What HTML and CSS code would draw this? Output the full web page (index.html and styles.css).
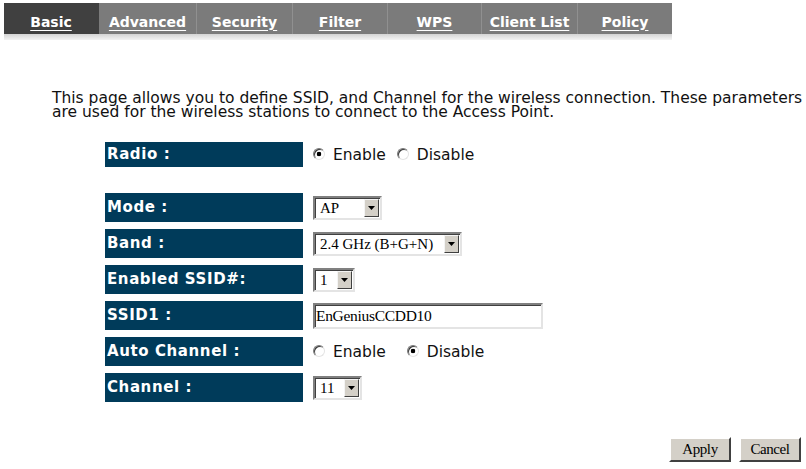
FILE: index.html
```html
<!DOCTYPE html>
<html>
<head>
<meta charset="utf-8">
<link rel="stylesheet" href="styles.css">
</head>
<body>
<div class="page">
  <nav class="tabs">
    <a class="tab active" style="width:95px">Basic</a>
    <a class="tab" style="width:98px">Advanced</a>
    <a class="tab" style="width:96px">Security</a>
    <a class="tab" style="width:95px">Filter</a>
    <a class="tab" style="width:94px">WPS</a>
    <a class="tab" style="width:96px">Client List</a>
    <a class="tab last" style="width:94px">Policy</a>
  </nav>
  <div class="tabs-shadow"></div>

  <p class="intro">This page allows you to define SSID, and Channel for the wireless connection. These parameters are used for the wireless stations to connect to the Access Point.</p>

  <div class="form">
    <div class="row radio-row">
      <div class="label">Radio :</div>
      <div class="ctrl">
        <label class="opt"><input type="radio" name="radio" checked><span>Enable</span></label>
        <label class="opt"><input type="radio" name="radio"><span>Disable</span></label>
      </div>
    </div>

    <div class="row first">
      <div class="label">Mode :</div>
      <div class="ctrl">
        <span class="sel" style="width:69px"><select><option>AP</option></select><span class="arrow"><svg width="7" height="4" viewBox="0 0 7 4"><path d="M0 0h7L3.5 4z" fill="#000"/></svg></span></span>
      </div>
    </div>
    <div class="row">
      <div class="label">Band :</div>
      <div class="ctrl">
        <span class="sel" style="width:149px"><select><option>2.4 GHz (B+G+N)</option></select><span class="arrow"><svg width="7" height="4" viewBox="0 0 7 4"><path d="M0 0h7L3.5 4z" fill="#000"/></svg></span></span>
      </div>
    </div>
    <div class="row">
      <div class="label">Enabled SSID#:</div>
      <div class="ctrl">
        <span class="sel" style="width:42px"><select><option>1</option></select><span class="arrow"><svg width="7" height="4" viewBox="0 0 7 4"><path d="M0 0h7L3.5 4z" fill="#000"/></svg></span></span>
      </div>
    </div>
    <div class="row">
      <div class="label">SSID1 :</div>
      <div class="ctrl">
        <input class="text" type="text" value="EnGeniusCCDD10">
      </div>
    </div>
    <div class="row">
      <div class="label">Auto Channel :</div>
      <div class="ctrl">
        <label class="opt wide"><input type="radio" name="auto"><span>Enable</span></label>
        <label class="opt"><input type="radio" name="auto" checked><span>Disable</span></label>
      </div>
    </div>
    <div class="row">
      <div class="label">Channel :</div>
      <div class="ctrl">
        <span class="sel" style="width:49px"><select><option>11</option></select><span class="arrow"><svg width="7" height="4" viewBox="0 0 7 4"><path d="M0 0h7L3.5 4z" fill="#000"/></svg></span></span>
      </div>
    </div>
  </div>

  <div class="actions">
    <button class="btn">Apply</button>
    <button class="btn">Cancel</button>
  </div>
</div>
</body>
</html>
```

FILE: styles.css
```css
html, body {
  margin: 0;
  padding: 0;
  background: #fff;
}
body {
  font-family: "DejaVu Sans", Verdana, sans-serif;
  color: #000;
}
.page {
  width: 806px;
  height: 469px;
  position: relative;
  padding-top: 3px;
  box-sizing: border-box;
}
.tabs {
  display: flex;
  margin-left: 4px;
  width: 668px;
  height: 31px;
  background: #7b7b7b;
}
.tab {
  display: flex;
  align-items: center;
  justify-content: center;
  height: 31px;
  padding-top: 6px;
  box-sizing: border-box;
  color: #fff;
  font-weight: bold;
  font-size: 14px;
  text-decoration: underline;
  text-underline-offset: 3px;
  border-right: 1px solid #909090;
}
.tab.active {
  background: #404040;
  border-right-color: #404040;
}
.tab.last {
  border-right: none;
}
.tabs-shadow {
  margin-left: 4px;
  width: 668px;
  height: 6px;
  background: linear-gradient(#d4d4d4, #f4f4f4);
}
.intro {
  margin: 52px 0 0 52px;
  height: 27px;
  font-size: 15.5px;
  line-height: 13.5px;
  color: #111;
}
.form {
  margin: 23px 0 0 105px;
  display: flex;
  flex-direction: column;
  gap: 7px;
}
.row {
  display: flex;
  align-items: center;
  height: 29px;
}
.row.radio-row {
  height: 25px;
}
.row.first {
  margin-top: 19px;
}
.label {
  width: 198px;
  height: 100%;
  box-sizing: border-box;
  background: #003b5a;
  color: #fff;
  font-weight: bold;
  font-size: 15px;
  letter-spacing: 0.6px;
  display: flex;
  align-items: center;
  padding: 0 0 2px 2px;
}
.ctrl {
  margin-left: 10px;
  display: flex;
  align-items: center;
}
.opt {
  display: inline-flex;
  align-items: flex-start;
  font-size: 15.5px;
  color: #111;
  margin-right: 11px;
}
.opt.wide {
  margin-right: 21px;
}
.opt span {
  line-height: 18px;
}
.opt input {
  appearance: none;
  -webkit-appearance: none;
  width: 12px;
  height: 12px;
  margin: 2px 8px 0 0;
  border-radius: 50%;
  box-sizing: border-box;
  border: 1px solid;
  border-color: #7a7a7a #e4e4e4 #e4e4e4 #7a7a7a;
  background: #fff;
  box-shadow: inset 1px 1px 0 #3a3a3a;
}
.opt input:checked {
  background: radial-gradient(circle, #000 0 2px, #fff 2.6px);
}
.sel {
  position: relative;
  display: inline-block;
  height: 24px;
  box-sizing: border-box;
  border: 2px solid;
  border-color: #808080 #e4e4e4 #e4e4e4 #808080;
  background: #fff;
}
.sel select {
  appearance: none;
  -webkit-appearance: none;
  border: none;
  outline: none;
  background: transparent;
  width: 100%;
  height: 100%;
  padding: 0 0 0 5px;
  font-family: "Liberation Serif", "Times New Roman", serif;
  font-size: 15px;
  color: #000;
  box-shadow: inset 1px 1px 0 #404040;
}
.sel .arrow {
  position: absolute;
  right: 1px;
  top: 1px;
  bottom: 1px;
  width: 15px;
  box-sizing: border-box;
  background: #d4d0c8;
  border: 1px solid;
  border-color: #f4f4f4 #404040 #404040 #f4f4f4;
  display: flex;
  align-items: center;
  justify-content: center;
}
.text {
  width: 230px;
  height: 26px;
  box-sizing: border-box;
  border: 2px solid;
  border-color: #808080 #e4e4e4 #e4e4e4 #808080;
  box-shadow: inset 1px 1px 0 #404040;
  font-family: "Liberation Serif", "Times New Roman", serif;
  font-size: 15.5px;
  letter-spacing: -0.3px;
  padding: 0 1px;
  outline: none;
}
.actions {
  position: absolute;
  right: 5px;
  top: 437px;
  display: flex;
  gap: 8px;
}
.btn {
  width: 62px;
  height: 25px;
  box-sizing: border-box;
  background: #d4d0c8;
  border: 2px solid;
  border-color: #fff #404040 #404040 #fff;
  font-family: "Liberation Serif", "Times New Roman", serif;
  font-size: 15px;
  letter-spacing: -0.4px;
  color: #000;
  padding: 0;
}
```
